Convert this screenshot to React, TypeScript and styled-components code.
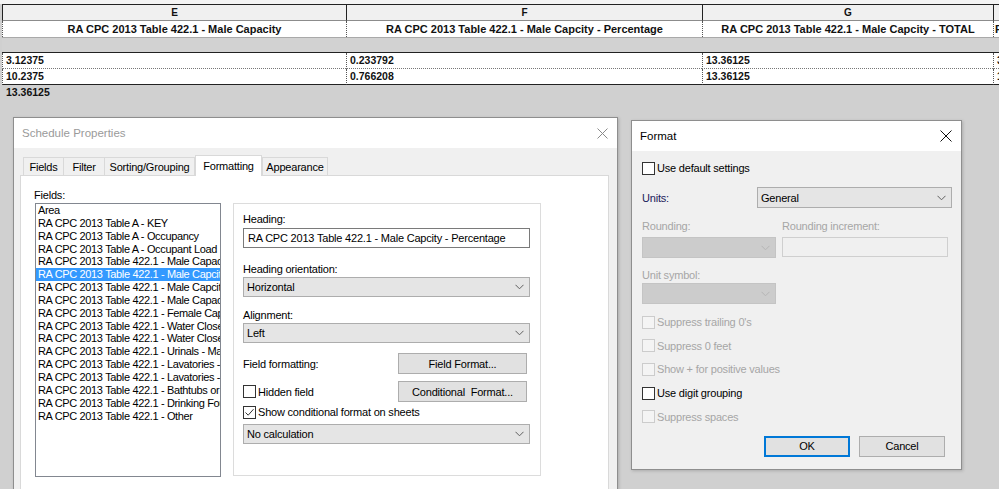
import React from "react";
import styled, { createGlobalStyle } from "styled-components";

const Global = createGlobalStyle`
  html, body { margin: 0; padding: 0; background: #d0d0d0; overflow: hidden; }
  #root { width: 999px; height: 489px; overflow: hidden; }
  * { box-sizing: border-box; }
`;

const Page = styled.div`
  width: 999px;
  height: 489px;
  overflow: hidden;
  background: #d0d0d0;
  font-family: "Liberation Sans", Arial, sans-serif;
  display: flex;
  flex-direction: column;
`;

const TopStrip = styled.div`
  height: 4px;
  background: #f4f4f4;
  flex: none;
`;

/* ---------- schedule sheet ---------- */
const Sheet = styled.div`
  display: grid;
  grid-template-columns: 344px 356px 291px 320px;
  margin-left: 2px;
  width: max-content;
  flex: none;
`;

const LetterCell = styled.div`
  height: 17px;
  border-top: 1px solid #222;
  border-bottom: 1px solid #8c8c8c;
  border-left: 1px solid #222;
  background: #f0f0f0;
  font-size: 10px;
  font-weight: 700;
  line-height: 15px;
  text-align: center;
  color: #111;
`;

const HeadCell = styled.div<{ $align?: string }>`
  height: 16px;
  border-left: 1px dotted #555;
  background: #fff;
  font-size: 11px;
  font-weight: 700;
  line-height: 16px;
  text-align: ${(p) => p.$align ?? "center"};
  padding-left: ${(p) => (p.$align === "left" ? 1 : 0)}px;
  color: #111;
  white-space: nowrap;
  overflow: hidden;
`;

const BandCell = styled.div`
  height: 16px;
  border-top: 1px solid #a9a9a9;
  border-bottom: 1px solid #222;
  background: #d2d2d2;
`;

const DataCell = styled.div<{ $last?: boolean }>`
  height: 16px;
  border-left: 1px dotted #555;
  border-bottom: ${(p) => (p.$last ? "1px solid #222" : "1px dotted #777")};
  background: #fff;
  font-size: 10.5px;
  font-weight: 700;
  line-height: 15px;
  padding-left: 3px;
  color: #111;
  white-space: nowrap;
  overflow: hidden;
`;

const TotalLine = styled.div`
  padding-left: 6px;
  font-size: 10.5px;
  font-weight: 700;
  line-height: 14px;
  color: #111;
  flex: none;
`;

/* ---------- desktop with windows ---------- */
const Desk = styled.div`
  display: flex;
  align-items: flex-start;
  gap: 13px;
  padding-left: 13px;
  margin-top: 18px;
  font-size: 11px;
  letter-spacing: -0.2px;
  color: #000;
`;

const Window = styled.div<{ $w: number; $h: number; $top: number }>`
  width: ${(p) => p.$w}px;
  height: ${(p) => p.$h}px;
  margin-top: ${(p) => p.$top}px;
  border: 1px solid #8e8e8e;
  background: #f0f0f0;
  box-shadow: 1px 1px 3px rgba(0, 0, 0, 0.18);
  display: flex;
  flex-direction: column;
  flex: none;
  overflow: hidden;
`;

const TitleBar = styled.div<{ $inactive?: boolean }>`
  height: 30px;
  flex: none;
  background: #fff;
  display: flex;
  align-items: center;
  justify-content: space-between;
  padding: 0 9px 0 8px;
  font-size: 11.5px;
  letter-spacing: 0;
  color: ${(p) => (p.$inactive ? "#9a9a9a" : "#000")};
`;

const CloseX = ({ color, size }: { color: string; size: number }) => (
  <svg width={size} height={size} viewBox={`0 0 ${size} ${size}`}>
    <path d={`M0.5 0.5 L${size - 0.5} ${size - 0.5} M${size - 0.5} 0.5 L0.5 ${size - 0.5}`} stroke={color} strokeWidth="1" fill="none" />
  </svg>
);

/* schedule properties */
const SchedBody = styled.div`
  padding: 7px 8px 0 6px;
  display: flex;
  flex-direction: column;
`;

const TabStrip = styled.div`
  display: flex;
  align-items: flex-end;
  height: 20px;
  padding-left: 3px;
  position: relative;
  z-index: 1;
`;

const Tab = styled.div<{ $w: number; $active?: boolean; $first?: boolean }>`
  width: ${(p) => p.$w}px;
  height: ${(p) => (p.$active ? 21 : 18)}px;
  margin-bottom: ${(p) => (p.$active ? -1 : 0)}px;
  margin-left: ${(p) => (p.$first || p.$active ? 0 : -1)}px;
  margin-right: ${(p) => (p.$active ? 1 : 0)}px;
  background: ${(p) => (p.$active ? "#fff" : "#f0f0f0")};
  border: 1px solid #d9d9d9;
  border-bottom: none;
  display: flex;
  align-items: center;
  justify-content: center;
  padding-bottom: ${(p) => (p.$active ? 1 : 0)}px;
  white-space: nowrap;
`;

const TabPanel = styled.div`
  width: 589px;
  height: 330px;
  background: #fff;
  border: 1px solid #d9d9d9;
  display: grid;
  grid-template-columns: 186px 308px;
  grid-template-rows: 15px auto;
  column-gap: 12px;
  padding: 12px 0 0 14px;
`;

const FieldLabel = styled.div`
  line-height: 14px;
  margin-left: -1px;
`;

const ListBox = styled.div`
  grid-column: 1;
  grid-row: 2;
  width: 186px;
  height: 274px;
  border: 1px solid #828790;
  background: #fff;
  overflow: hidden;
  letter-spacing: -0.35px;
`;

const ListItem = styled.div<{ $selected?: boolean }>`
  height: 12.85px;
  line-height: 12.85px;
  padding-left: 2px;
  white-space: nowrap;
  overflow: hidden;
  background: ${(p) => (p.$selected ? "#3399ff" : "transparent")};
  color: ${(p) => (p.$selected ? "#fff" : "#000")};
`;

const GroupBox = styled.div`
  grid-column: 2;
  grid-row: 2;
  height: 273px;
  border: 1px solid #dcdcdc;
  background: #fff;
  padding: 8px 10px 0 9px;
  display: flex;
  flex-direction: column;
`;

const Label = styled.div<{ $mt?: number; $disabled?: boolean; $color?: string }>`
  line-height: 14px;
  margin-top: ${(p) => p.$mt ?? 0}px;
  color: ${(p) => (p.$disabled ? "#a6a6a6" : p.$color ?? "#000")};
  white-space: nowrap;
`;

const TextBox = styled.div<{ $mt?: number; $disabled?: boolean; $h?: number }>`
  height: ${(p) => p.$h ?? 20}px;
  margin-top: ${(p) => p.$mt ?? 0}px;
  border: 1px solid ${(p) => (p.$disabled ? "#cfcfcf" : "#7a7a7a")};
  background: ${(p) => (p.$disabled ? "#f0f0f0" : "#fff")};
  padding-left: 4px;
  line-height: 18px;
  white-space: nowrap;
  overflow: hidden;
`;

const SelectBox = styled.div<{ $mt?: number; $disabled?: boolean; $w?: number; $h?: number }>`
  height: ${(p) => p.$h ?? 20}px;
  width: ${(p) => (p.$w ? `${p.$w}px` : "auto")};
  margin-top: ${(p) => p.$mt ?? 0}px;
  border: 1px solid ${(p) => (p.$disabled ? "#c4c4c4" : "#adadad")};
  background: ${(p) => (p.$disabled ? "#cccccc" : "#e5e5e5")};
  display: flex;
  align-items: center;
  justify-content: space-between;
  padding: 0 5px 0 3px;
  white-space: nowrap;
  flex: none;
`;

const Chevron = ({ disabled }: { disabled?: boolean }) => (
  <svg width="9" height="6" viewBox="0 0 9 6">
    <path d="M0.5 0.8 L4.5 4.8 L8.5 0.8" stroke={disabled ? "#b5b5b5" : "#606060"} strokeWidth="1" fill="none" />
  </svg>
);

const Select = ({ text, disabled, mt, w, h }: { text?: string; disabled?: boolean; mt?: number; w?: number; h?: number }) => (
  <SelectBox $disabled={disabled} $mt={mt} $w={w} $h={h}>
    <span>{text}</span>
    <Chevron disabled={disabled} />
  </SelectBox>
);

const Row = styled.div<{ $mt?: number; $h?: number; $pr?: number }>`
  display: flex;
  align-items: center;
  justify-content: space-between;
  margin-top: ${(p) => p.$mt ?? 0}px;
  height: ${(p) => p.$h ?? 14}px;
  padding-right: ${(p) => p.$pr ?? 3}px;
  flex: none;
`;

const Button = styled.div<{ $w: number; $default?: boolean }>`
  width: ${(p) => p.$w}px;
  height: 21px;
  border: ${(p) => (p.$default ? "2px solid #0078d7" : "1px solid #adadad")};
  background: #e1e1e1;
  display: flex;
  align-items: center;
  justify-content: center;
  white-space: pre;
  flex: none;
`;

const CheckRow = styled.div<{ $disabled?: boolean; $mt?: number }>`
  display: flex;
  align-items: center;
  gap: 2px;
  height: 14px;
  margin-top: ${(p) => p.$mt ?? 0}px;
  color: ${(p) => (p.$disabled ? "#a6a6a6" : "#000")};
  white-space: nowrap;
  flex: none;
`;

const Box = styled.span<{ $disabled?: boolean }>`
  width: 13px;
  height: 13px;
  border: 1px solid ${(p) => (p.$disabled ? "#cccccc" : "#333")};
  background: ${(p) => (p.$disabled ? "#f4f4f4" : "#fff")};
  display: inline-flex;
  align-items: center;
  justify-content: center;
  flex: none;
`;

const Check = ({ label, checked, disabled, mt }: { label: string; checked?: boolean; disabled?: boolean; mt?: number }) => (
  <CheckRow $disabled={disabled} $mt={mt}>
    <Box $disabled={disabled}>
      {checked && (
        <svg width="11" height="11" viewBox="0 0 11 11">
          <path d="M1.5 5.5 L4.2 8.2 L9.5 2.2" stroke="#333" strokeWidth="1" fill="none" />
        </svg>
      )}
    </Box>
    <span>{label}</span>
  </CheckRow>
);

/* format dialog */
const FormatBody = styled.div`
  padding: 10px 9px 0 10px;
  display: flex;
  flex-direction: column;
`;

const RoundGrid = styled.div`
  display: grid;
  grid-template-columns: 134px 166px;
  grid-template-rows: 14px 21px;
  column-gap: 6px;
  row-gap: 4px;
  margin-top: 11px;
`;

const CheckList = styled.div`
  display: flex;
  flex-direction: column;
  gap: 9.7px;
  margin-top: 11px;
`;

const ButtonRow = styled.div`
  display: flex;
  justify-content: flex-end;
  gap: 9px;
  padding-right: 7px;
  margin-top: 12px;
`;

const fields = [
  "Area",
  "RA CPC 2013 Table A - KEY",
  "RA CPC 2013 Table A - Occupancy",
  "RA CPC 2013 Table A - Occupant Load",
  "RA CPC 2013 Table 422.1 - Male Capacity",
  "RA CPC 2013 Table 422.1 - Male Capcity - Percentage",
  "RA CPC 2013 Table 422.1 - Male Capcity - TOTAL",
  "RA CPC 2013 Table 422.1 - Male Capacity - Rounded",
  "RA CPC 2013 Table 422.1 - Female Capacity",
  "RA CPC 2013 Table 422.1 - Water Closets - Male",
  "RA CPC 2013 Table 422.1 - Water Closets - Female",
  "RA CPC 2013 Table 422.1 - Urinals - Male",
  "RA CPC 2013 Table 422.1 - Lavatories - Male",
  "RA CPC 2013 Table 422.1 - Lavatories - Female",
  "RA CPC 2013 Table 422.1 - Bathtubs or Showers",
  "RA CPC 2013 Table 422.1 - Drinking Fountains",
  "RA CPC 2013 Table 422.1 - Other",
];

const tabs = [
  { t: "Fields", w: 41 },
  { t: "Filter", w: 42 },
  { t: "Sorting/Grouping", w: 91 },
  { t: "Formatting", w: 67, active: true },
  { t: "Appearance", w: 66 },
];

export default function App() {
  return (
    <Page>
      <Global />
      <TopStrip />
      <Sheet>
        <LetterCell>E</LetterCell>
        <LetterCell>F</LetterCell>
        <LetterCell>G</LetterCell>
        <LetterCell>H</LetterCell>

        <HeadCell>RA CPC 2013 Table 422.1 - Male Capacity</HeadCell>
        <HeadCell>RA CPC 2013 Table 422.1 - Male Capcity - Percentage</HeadCell>
        <HeadCell>RA CPC 2013 Table 422.1 - Male Capcity - TOTAL</HeadCell>
        <HeadCell $align="left">RA CPC 2013 Table 422.1 - Female Capacity</HeadCell>

        <BandCell />
        <BandCell />
        <BandCell />
        <BandCell />

        <DataCell>3.12375</DataCell>
        <DataCell>0.233792</DataCell>
        <DataCell>13.36125</DataCell>
        <DataCell>3.12375</DataCell>

        <DataCell $last>10.2375</DataCell>
        <DataCell $last>0.766208</DataCell>
        <DataCell $last>13.36125</DataCell>
        <DataCell $last>10.2375</DataCell>
      </Sheet>
      <TotalLine>13.36125</TotalLine>

      <Desk>
        <Window $w={605} $h={400} $top={0}>
          <TitleBar $inactive>
            <span>Schedule Properties</span>
            <CloseX color="#8a8a8a" size={11} />
          </TitleBar>
          <SchedBody>
            <TabStrip>
              {tabs.map((tb, i) => (
                <Tab key={tb.t} $w={tb.w} $active={tb.active} $first={i === 0}>
                  {tb.t}
                </Tab>
              ))}
            </TabStrip>
            <TabPanel>
              <FieldLabel>Fields:</FieldLabel>
              <div />
              <ListBox>
                {fields.map((f, i) => (
                  <ListItem key={i} $selected={i === 5}>
                    {f}
                  </ListItem>
                ))}
              </ListBox>
              <GroupBox>
                <Label>Heading:</Label>
                <TextBox $mt={2}>RA CPC 2013 Table 422.1 - Male Capcity - Percentage</TextBox>
                <Label $mt={14}>Heading orientation:</Label>
                <Select text="Horizontal" mt={1} />
                <Label $mt={11}>Alignment:</Label>
                <Select text="Left" mt={1} />
                <Row $mt={10} $h={21}>
                  <span>Field formatting:</span>
                  <Button $w={129}>Field Format...</Button>
                </Row>
                <Row $mt={7} $h={21}>
                  <Check label="Hidden field" />
                  <Button $w={129}>{"Conditional  Format..."}</Button>
                </Row>
                <Check label="Show conditional format on sheets" checked mt={3} />
                <Select text="No calculation" mt={5} />
              </GroupBox>
            </TabPanel>
          </SchedBody>
        </Window>

        <Window $w={331} $h={350} $top={3}>
          <TitleBar>
            <span>Format</span>
            <CloseX color="#111" size={12} />
          </TitleBar>
          <FormatBody>
            <Check label="Use default settings" />
            <Row $mt={12} $h={21} $pr={0}>
              <Label $color="#20205a">Units:</Label>
              <Select text="General" w={195} h={21} />
            </Row>
            <RoundGrid>
              <Label $disabled>Rounding:</Label>
              <Label $disabled>Rounding increment:</Label>
              <Select disabled h={21} />
              <TextBox $disabled $h={20} />
            </RoundGrid>
            <Label $disabled $mt={10}>Unit symbol:</Label>
            <Select disabled mt={1} w={134} h={21} />
            <CheckList>
              <Check label="Suppress trailing 0's" disabled />
              <Check label="Suppress 0 feet" disabled />
              <Check label="Show + for positive values" disabled />
              <Check label="Use digit grouping" />
              <Check label="Suppress spaces" disabled />
            </CheckList>
            <ButtonRow>
              <Button $w={86} $default>OK</Button>
              <Button $w={86}>Cancel</Button>
            </ButtonRow>
          </FormatBody>
        </Window>
      </Desk>
    </Page>
  );
}
